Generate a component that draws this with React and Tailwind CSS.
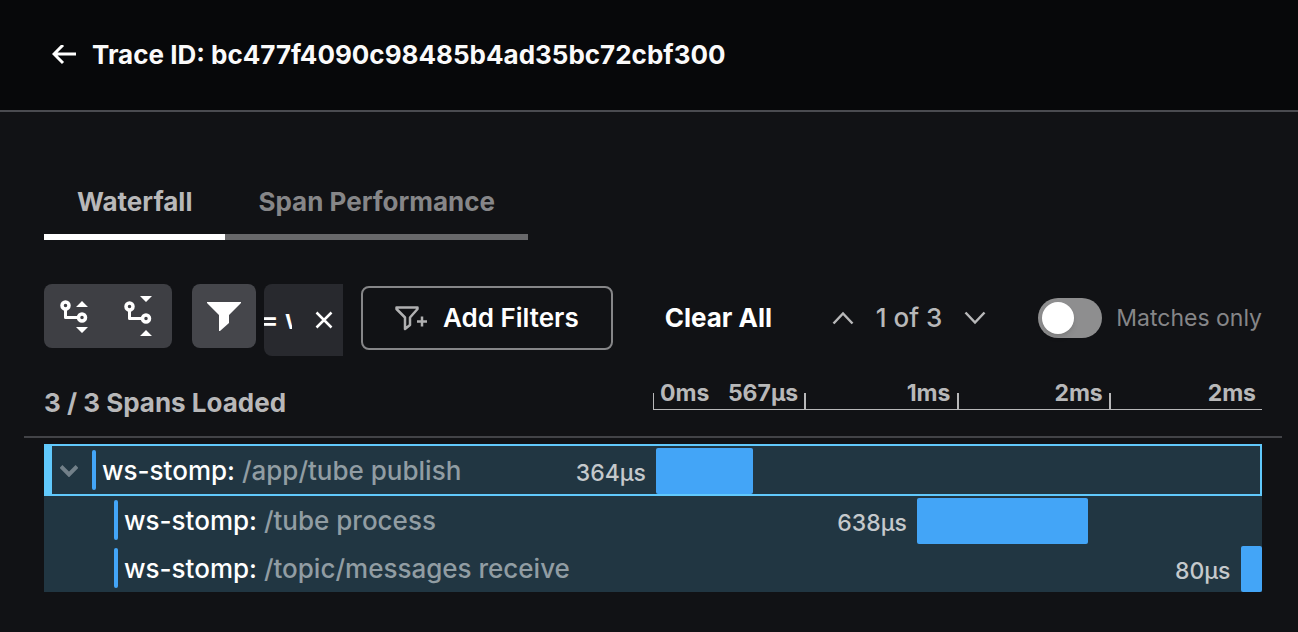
import React, { useState } from 'react';

const TOTAL = 2268;

const spans = [
  { id: 'a1', service: 'ws-stomp', operation: '/app/tube publish', start: 0, duration: 364, depth: 0 },
  { id: 'b2', service: 'ws-stomp', operation: '/tube process', start: 983, duration: 638, depth: 1 },
  { id: 'c3', service: 'ws-stomp', operation: '/topic/messages receive', start: 2188, duration: 80, depth: 1 },
];

const ticks = ['567µs', '1ms', '2ms', '2ms'];

const ExpandIcon = () => (
  <svg width="28" height="34" viewBox="0 0 28 34" fill="none" aria-hidden="true">
    <circle cx="5.500" cy="6.500" r="3.500" stroke="white" strokeWidth="3.500" />
    <path d="M5.500 11V18.500H18" stroke="white" strokeWidth="3" strokeLinejoin="round" />
    <circle cx="22" cy="18.500" r="3.500" stroke="white" strokeWidth="3.500" />
    <path d="M22 2L28 8H16Z M22 34L16 28H28Z" fill="white" />
  </svg>
);

const CollapseIcon = () => (
  <svg width="28" height="40" viewBox="0 0 28 40" fill="none" aria-hidden="true">
    <circle cx="5.500" cy="10.500" r="3.500" stroke="white" strokeWidth="3.500" />
    <path d="M5.500 15V22.500H18" stroke="white" strokeWidth="3" strokeLinejoin="round" />
    <circle cx="22" cy="22.500" r="3.500" stroke="white" strokeWidth="3.500" />
    <path d="M22 6L16 0H28Z M22 34L28 40H16Z" fill="white" />
  </svg>
);

const Chevron = ({ up }) => (
  <svg width="22" height="14" viewBox="0 0 22 14" fill="none" stroke="#b8b8b9" strokeWidth="2.500" aria-hidden="true">
    <path d={up ? 'M1.500 12.500L11 2.500L20.500 12.500' : 'M1.500 1.500L11 11.500L20.500 1.500'} />
  </svg>
);

function Header() {
  return (
    <header className="flex items-center gap-4 h-28 px-[52px] bg-[#07080a] border-b-2 border-[#4a4b50]">
      <button aria-label="Back">
        <svg width="24" height="20" viewBox="0 0 24 20" fill="none" stroke="white" strokeWidth="3" aria-hidden="true">
          <path d="M24 9H2M11 0L2 9L11 18" />
        </svg>
      </button>
      <h1 className="text-[26px] leading-8 font-bold text-[#fafafa] whitespace-nowrap">Trace ID: bc477f4090c98485b4ad35bc72cbf300</h1>
    </header>
  );
}

function Tabs() {
  return (
    <div role="tablist" className="flex text-[26px] leading-8 font-bold whitespace-nowrap">
      <button role="tab" aria-selected="true" className="px-[33px] pb-4 border-b-6 border-white text-[#b8b8b9]">Waterfall</button>
      <button role="tab" aria-selected="false" className="px-[33px] pb-4 border-b-6 border-[#68686a] text-[#868688]">Span Performance</button>
    </div>
  );
}

function Toolbar() {
  const [matchesOnly, setMatchesOnly] = useState(false);

  return (
    <div className="flex items-start justify-between mt-11 whitespace-nowrap">
      <div className="flex items-start">
        <div className="flex w-32 h-16 rounded-lg bg-[#3e3f44]">
          <button aria-label="Expand all" className="flex-1 flex items-center justify-center pr-1"><ExpandIcon /></button>
          <button aria-label="Collapse all" className="flex-1 flex items-center justify-center pr-1"><CollapseIcon /></button>
        </div>
        <button aria-label="Filter" className="flex items-center justify-center w-16 h-16 ml-5 rounded-lg bg-[#45464b]">
          <svg width="34" height="30" viewBox="0 0 34 30" fill="white" aria-hidden="true">
            <path d="M0 1H34V2L22 14V22L13 30H12V14L0 2Z" />
          </svg>
        </button>
        <div className="flex items-center justify-between w-[79px] h-18 ml-2 pr-[10px] rounded-l-lg bg-[#28292e] text-white">
          <span className="w-7 overflow-hidden -indent-[3px] text-[26px] leading-8 font-semibold">= ws-stomp</span>
          <button aria-label="Remove filter">
            <svg width="18" height="18" viewBox="0 0 18 18" stroke="white" strokeWidth="2.500" aria-hidden="true">
              <path d="M1.500 1.500L16.500 16.500M16.500 1.500L1.500 16.500" />
            </svg>
          </button>
        </div>
        <button className="flex items-center gap-4 h-16 mt-0.5 ml-[18px] px-8 border-2 border-[#868688] rounded-lg text-[26px] leading-8 font-semibold text-white">
          <svg width="32" height="26" viewBox="0 0 32 26" fill="none" stroke="#b0b0b1" strokeWidth="2.500" strokeLinejoin="round" aria-hidden="true">
            <path d="M1.500 2.500H22.500V4L15 12.500V20L10 24V12.500L1.500 4Z" />
            <path d="M22 16.500H32M27 11.500V21.500" />
          </svg>
          Add Filters
        </button>
        <button className="mt-[18px] ml-13 text-[26px] leading-8 font-bold text-white">Clear All</button>
      </div>
      <div className="flex items-center gap-[22px] h-16 mt-0.5 mr-13 ml-auto text-[26px] leading-8 font-medium text-[#b8b8b9]">
        <button aria-label="Previous match"><Chevron up /></button>
        <span>1 of 3</span>
        <button aria-label="Next match"><Chevron /></button>
      </div>
      <label className="flex items-center gap-[14px] mt-[14px] text-[23px] leading-8 text-[#868688]">
        <input
          type="checkbox"
          role="switch"
          checked={matchesOnly}
          onChange={(e) => setMatchesOnly(e.target.checked)}
          className="appearance-none w-16 h-10 p-1 rounded-full bg-[#8e8e8f] before:block before:size-8 before:rounded-full before:bg-white before:shadow-md checked:before:translate-x-6"
        />
        Matches only
      </label>
    </div>
  );
}

function Ruler() {
  return (
    <div className="grid grid-cols-2 items-start text-[#b8b8b9] whitespace-nowrap">
      <h2 className="pt-[31px] text-[26px] leading-8 font-bold">3 / 3 Spans Loaded</h2>
      <div className="relative grid grid-cols-4 mt-[21px] border-b border-[#b8b8b9] text-[23px] leading-8 font-bold">
        <span className="absolute left-[7px] bottom-0">0ms</span>
        <span className="absolute left-0 bottom-0 w-px h-4 bg-[#b8b8b9]"></span>
        {ticks.map((t, i) => (
          <div key={i} className="flex items-end justify-end gap-[6px]">
            {t}
            <span className={i < 3 ? 'w-0.5 h-4 -mr-px bg-[#b8b8b9]' : ''}></span>
          </div>
        ))}
      </div>
    </div>
  );
}

function SpanRow({ span, selected, onSelect }) {
  return (
    <li
      onClick={onSelect}
      className={`grid grid-cols-2 bg-[#213642] ${selected ? 'border-2 border-l-8 border-[#61c9fc]' : ''}`}
    >
      <div className={`flex items-center h-12 ${span.depth === 0 ? 'pl-2' : 'pl-[70px]'}`}>
        {span.depth === 0 && (
          <button aria-label="Collapse span" className="mr-[14px]">
            <svg width="18" height="14" viewBox="0 0 18 14" fill="none" stroke="#728089" strokeWidth="4" aria-hidden="true">
              <path d="M1 3.500L9 11.500L17 3.500" />
            </svg>
          </button>
        )}
        <span className="w-1 h-10 mr-[6px] rounded-sm bg-[#43a5f7]"></span>
        <span className="pt-0.5 text-[26px] leading-8 font-medium text-[#919da3] whitespace-nowrap">
          <span className="text-white">{span.service}:</span> {span.operation}
        </span>
      </div>
      <div className="flex pt-0.5">
        <div
          className="relative rounded-xs bg-[#43a5f7]"
          style={{ marginLeft: `${(span.start / TOTAL) * 100}%`, width: `${(span.duration / TOTAL) * 100}%` }}
        >
          <span className="absolute right-full top-[9px] mr-[10px] text-[23px] leading-8 font-medium text-[#c5c9cc]">{span.duration}µs</span>
        </div>
      </div>
    </li>
  );
}

export default function App() {
  const [selected, setSelected] = useState('a1');

  return (
    <div className="min-h-screen bg-[#111215] font-['Inter',sans-serif]">
      <Header />
      <main className="pl-6 pr-4 pt-[74px] pb-10">
        <div className="px-5">
          <div className="flex"><Tabs /></div>
          <Toolbar />
        </div>
        <div className="px-5 pb-[17px] border-b-2 border-[#424347]">
          <Ruler />
        </div>
        <ul className="mx-5 mt-[6px]">
          {spans.map((s) => (
            <SpanRow key={s.id} span={s} selected={s.id === selected} onSelect={() => setSelected(s.id)} />
          ))}
        </ul>
      </main>
    </div>
  );
}
